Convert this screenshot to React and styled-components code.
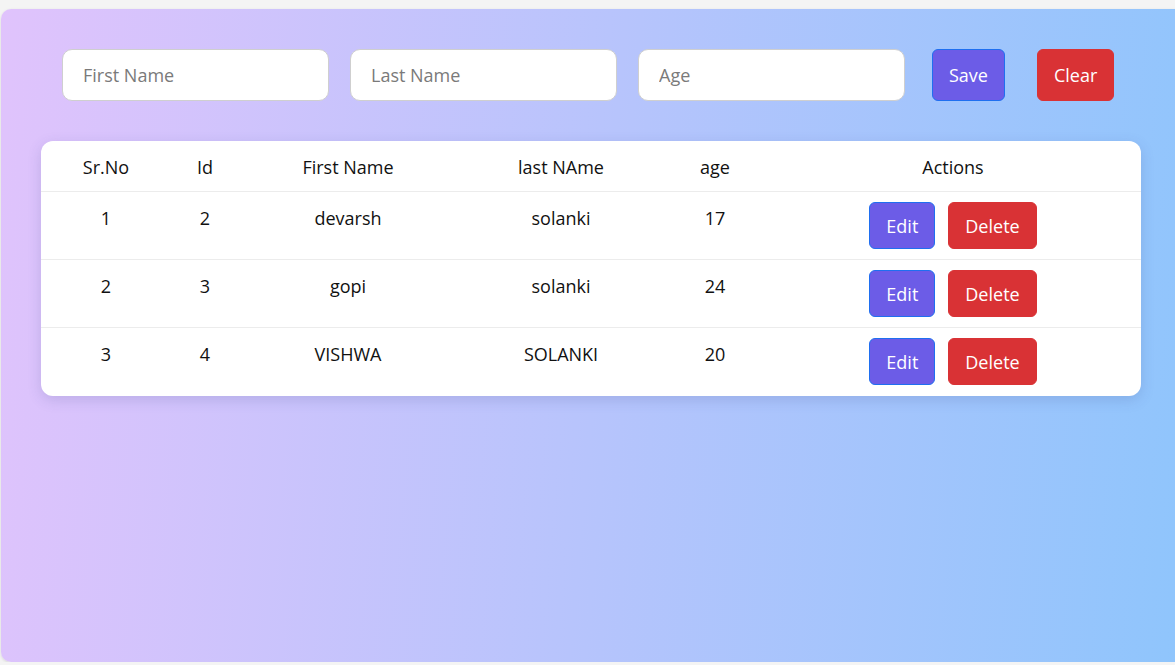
import React from "react";
import styled, { createGlobalStyle } from "styled-components";

const Global = createGlobalStyle`
  html, body { margin: 0; padding: 0; background: #f4f4f4; overflow: hidden; }
  body { font-family: "Open Sans", "Noto Sans", sans-serif; }
  * { box-sizing: border-box; }
`;

const Panel = styled.div`
  margin: 9px -20px 0 1px;
  height: 653px;
  border-radius: 10px;
  background: linear-gradient(95deg, #e0c3fc 0%, #8ec5fc 100%);
  box-shadow: 0 1px 3px rgba(0, 0, 0, 0.12);
  padding: 40px 0 0 40px;
  width: 1194px;
`;

const Form = styled.div`
  display: flex;
  align-items: center;
  padding-left: 21px;
  height: 52px;
`;

const Input = styled.input`
  width: 267px;
  height: 52px;
  margin-right: 21px;
  border: 1px solid #cfcfcf;
  border-radius: 10px;
  padding: 0 20px;
  font-family: inherit;
  font-size: 18px;
  color: #222;
  background: #fff;
  outline: none;
  &::placeholder { color: #7a7a7a; }
  &:last-of-type { margin-right: 27px; }
`;

const Button = styled.button`
  height: ${(p) => p.$h || 52}px;
  padding: 0 ${(p) => p.$px || 16}px;
  border-radius: 6px;
  border: 1px solid ${(p) => (p.$variant === "danger" ? "#d93235" : "#1f6ff0")};
  background: ${(p) => (p.$variant === "danger" ? "#d93235" : "#6c5ce7")};
  color: #fff;
  font-family: inherit;
  font-size: 18px;
  cursor: pointer;
  margin-left: ${(p) => p.$ml || 0}px;
`;

const Card = styled.div`
  margin-top: 40px;
  width: 1100px;
  background: #fff;
  border-radius: 12px;
  box-shadow: 0 4px 14px rgba(60, 70, 140, 0.18);
  overflow: hidden;
  padding-bottom: 1px;
`;

const Row = styled.div`
  display: grid;
  grid-template-columns: 130px 68px 218px 208px 100px 376px;
  height: ${(p) => (p.$head ? 50 : 68)}px;
  border-top: ${(p) => (p.$head ? "none" : "1px solid #ececec")};
  color: #111;
  font-size: 18px;
`;

const Cell = styled.div`
  text-align: center;
  padding-top: ${(p) => (p.$head ? 14 : 14)}px;
  line-height: 24px;
  white-space: nowrap;
`;

const Actions = styled.div`
  display: flex;
  justify-content: center;
  gap: 13px;
  padding-top: 10px;
`;

const data = [
  { sr: 1, id: 2, first: "devarsh", last: "solanki", age: 17 },
  { sr: 2, id: 3, first: "gopi", last: "solanki", age: 24 },
  { sr: 3, id: 4, first: "VISHWA", last: "SOLANKI", age: 20 },
];

export default function App() {
  return (
    <>
      <Global />
      <Panel>
        <Form>
          <Input placeholder="First Name" />
          <Input placeholder="Last Name" />
          <Input placeholder="Age" />
          <Button $px={16}>Save</Button>
          <Button $variant="danger" $ml={32} $px={16}>Clear</Button>
        </Form>
        <Card>
          <Row $head>
            <Cell $head>Sr.No</Cell>
            <Cell $head>Id</Cell>
            <Cell $head>First Name</Cell>
            <Cell $head>last NAme</Cell>
            <Cell $head>age</Cell>
            <Cell $head>Actions</Cell>
          </Row>
          {data.map((r) => (
            <Row key={r.sr}>
              <Cell>{r.sr}</Cell>
              <Cell>{r.id}</Cell>
              <Cell>{r.first}</Cell>
              <Cell>{r.last}</Cell>
              <Cell>{r.age}</Cell>
              <Actions>
                <Button $h={47} $px={16}>Edit</Button>
                <Button $h={47} $variant="danger" $px={16}>Delete</Button>
              </Actions>
            </Row>
          ))}
        </Card>
      </Panel>
    </>
  );
}
